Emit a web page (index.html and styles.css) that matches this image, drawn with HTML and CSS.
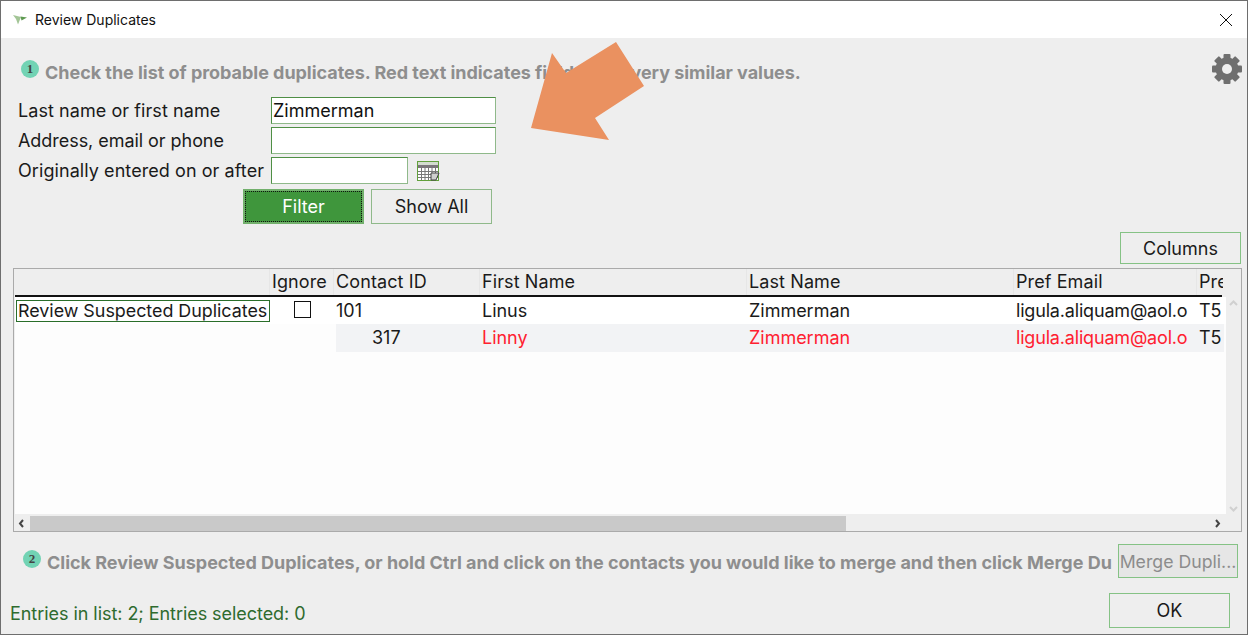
FILE: index.html
```html
<!DOCTYPE html>
<html lang="en">
<head>
<meta charset="utf-8">
<title>Review Duplicates</title>
<link rel="stylesheet" href="styles.css">
</head>
<body>
<div class="window">
  <header class="titlebar">
    <svg class="logo" width="14" height="10" viewBox="0 0 14 10"><path d="M0 0 L8 2 L5 9.5 L3 4 Z" fill="#a3c596"/><path d="M7.5 1.5 L14 2.5 L8.5 5.5 Z" fill="#5e9a50"/></svg>
    <span class="title">Review Duplicates</span>
    <svg class="close" width="14" height="14" viewBox="0 0 14 14"><path d="M1 1 L13 13 M13 1 L1 13" stroke="#111" stroke-width="1" fill="none"/></svg>
  </header>
  <main class="content">
    <div class="step step-one">
      <span class="badge">1</span>
      <span class="step-text">Check the list of probable duplicates. Red text indicates fields with very similar values.</span>
      <svg class="gear" width="32" height="32" viewBox="-16 -16 32 32">
        <g fill="#6f6f6f">
          <rect x="-3.5" y="-15" width="7" height="30" rx="1"/>
          <rect x="-3.5" y="-15" width="7" height="30" rx="1" transform="rotate(45)"/>
          <rect x="-3.5" y="-15" width="7" height="30" rx="1" transform="rotate(90)"/>
          <rect x="-3.5" y="-15" width="7" height="30" rx="1" transform="rotate(135)"/>
          <circle r="11.5"/>
        </g>
        <circle r="5" fill="#eeeeee"/>
      </svg>
    </div>
    <form class="filters">
      <label class="lbl">Last name or first name</label>
      <div class="field-row"><input class="input wide" type="text" value="Zimmerman"></div>
      <label class="lbl lbl-tight">Address, email or phone</label>
      <div class="field-row"><input class="input wide" type="text"></div>
      <label class="lbl">Originally entered on or after</label>
      <div class="field-row">
        <input class="input short" type="text">
        <svg class="cal" width="23" height="21" viewBox="0 0 23 21">
          <rect x="0.5" y="0.5" width="21" height="19" fill="#fff" stroke="#62a03c"/>
          <rect x="1" y="1" width="20" height="3" fill="#d4dcd0"/>
          <rect x="1" y="4" width="20" height="3" fill="#7b767b"/>
          <path d="M1 10.5H21M1 13.5H21M1 16.5H21M4.5 7V19M8 7V19M11.5 7V19M15 7V19M18.5 7V19" stroke="#777" stroke-width="1" fill="none"/>
          <path d="M14 12 H22 L19 19 H14 Z" fill="#cfcfcf" stroke="#444" stroke-width="1"/>
        </svg>
      </div>
    </form>
    <div class="filter-actions">
      <button class="btn primary" type="button">Filter</button>
      <button class="btn" type="button">Show All</button>
    </div>
    <div class="columns-row"><button class="btn" type="button">Columns</button></div>
    <section class="grid-box">
      <div class="grid-main">
        <div class="grid-head">
          <div class="hcell"></div>
          <div class="hcell">Ignore</div>
          <div class="hcell">Contact ID</div>
          <div class="hcell">First Name</div>
          <div class="hcell">Last Name</div>
          <div class="hcell">Pref Email</div>
          <div class="hcell last">Pre</div>
        </div>
        <div class="head-rule"></div>
        <div class="grid-body">
          <div class="grid-row first-row">
            <div class="cell action"><span class="review">Review Suspected Duplicates</span></div>
            <div class="cell check"><span class="checkbox"></span></div>
            <div class="cell">101</div>
            <div class="cell">Linus</div>
            <div class="cell">Zimmerman</div>
            <div class="cell email">ligula.aliquam@aol.o</div>
            <div class="cell last">T5</div>
          </div>
          <div class="grid-row second-row">
            <div class="cell blank"></div>
            <div class="cell blank"></div>
            <div class="cell alt indent">317</div>
            <div class="cell alt red">Linny</div>
            <div class="cell alt red">Zimmerman</div>
            <div class="cell alt red email">ligula.aliquam@aol.o</div>
            <div class="cell alt last">T5</div>
          </div>
        </div>
        <div class="vbar">
          <svg width="15" height="10" viewBox="0 0 15 10"><path d="M4 7 L7.5 3.5 L11 7" stroke="#d0d0d0" stroke-width="2" fill="none"/></svg>
          <svg width="15" height="10" viewBox="0 0 15 10"><path d="M4 3 L7.5 6.5 L11 3" stroke="#d0d0d0" stroke-width="2" fill="none"/></svg>
        </div>
      </div>
      <div class="hbar">
        <svg width="16" height="15" viewBox="0 0 16 15"><path d="M9 4 L6 7.5 L9 11" stroke="#444" stroke-width="2" fill="none"/></svg>
        <div class="track"><div class="thumb"></div></div>
        <svg width="16" height="15" viewBox="0 0 16 15"><path d="M6 4 L9 7.5 L6 11" stroke="#444" stroke-width="2" fill="none"/></svg>
      </div>
    </section>
    <div class="step step-two">
      <span class="badge">2</span>
      <span class="step-text">Click Review Suspected Duplicates, or hold Ctrl and click on the contacts you would like to merge and then click Merge Du</span>
      <button class="btn merge" type="button" disabled>Merge Dupli...</button>
    </div>
    <footer class="footer">
      <span class="status">Entries in list: 2; Entries selected: 0</span>
      <button class="btn" type="button">OK</button>
    </footer>
    <svg class="arrow" width="115" height="100" viewBox="0 0 115 100"><polygon points="21,13 35,33 85,2 113,46 64,78 78,100 0,88" fill="#ea9160"/></svg>
  </main>
</div>
</body>
</html>
```
FILE: styles.css
```css
* { box-sizing: border-box; }
html, body { margin: 0; padding: 0; height: 100%; overflow: hidden; }
body { font-family: Inter, "Noto Sans", sans-serif; font-size: 18px; color: #1a1a1a; background: #eee; }
.window { width: 1248px; height: 635px; border: 1px solid #6e6e6e; display: flex; flex-direction: column; background: #eee; }
.titlebar { height: 37px; flex: none; background: #fff; display: flex; align-items: center; padding: 0 14px 0 12px; }
.logo { margin-right: 8px; }
.title { font-size: 14px; color: #111; flex: 1; }
.content { position: relative; flex: 1; display: flex; flex-direction: column; min-height: 0; }
.step { display: flex; align-items: center; font-weight: 700; color: #8e8e8e; white-space: nowrap; }
.step-one { height: 58px; padding: 10px 4px 0 20px; }
.step-one .step-text { flex: 1; margin-left: 6px; letter-spacing: -0.034px; }
.badge { width: 18px; height: 18px; flex: none; border-radius: 50%; background: #72d3b4; color: #444; font: 700 13px/18px "Liberation Serif", serif; text-align: center; margin-top: -6px; }
.gear { margin-top: -6px; }
.filters { display: grid; grid-template-columns: 253px 1fr; grid-auto-rows: 27px; row-gap: 3px; padding-left: 17px; margin-top: 1px; }
.lbl { line-height: 27px; white-space: nowrap; letter-spacing: 0.07px; }
.lbl-tight { letter-spacing: -0.05px; }
.field-row { display: flex; align-items: center; }
.input { height: 27px; border: 1px solid #8fb98a; border-top-color: #4f8f45; border-left-color: #4f8f45; background: #fff; font: 18px Inter, sans-serif; color: #111; padding: 0 1px; outline: none; }
.wide { width: 225px; }
.short { width: 137px; }
.cal { margin-left: 9px; margin-top: 1px; }
.btn { height: 35px; width: 121px; flex: none; border: 1px solid #8fb98a; background: #eee; font: 18px Inter, sans-serif; color: #1a1a1a; padding: 0; }
.filter-actions { display: flex; gap: 7px; padding-left: 242px; margin-top: 5px; }
.primary { background: #3f963c; color: #fff; border: 2px solid #72b06c; outline: 1px dotted #111; outline-offset: -3px; }
.columns-row { display: flex; justify-content: flex-end; padding-right: 6px; margin-top: 8px; }
.columns-row .btn { height: 32px; border-color: #85c285; }
.grid-box { margin: 4px 5px 0 12px; height: 264px; flex: none; border: 1px solid #aaa; display: flex; flex-direction: column; background: #eee; }
.grid-main { position: relative; flex: 1; display: flex; flex-direction: column; min-height: 0; }
.grid-head, .grid-row { display: grid; grid-template-columns: 256px 64px 146px 267px 267px 183px 26px; }
.grid-head { height: 26px; flex: none; margin-right: 15px; }
.head-rule { height: 2px; flex: none; background: #111; margin: 0 19px 0 1px; }
.hcell { line-height: 26px; padding-left: 2px; border-right: 1px solid #e6e6e6; white-space: nowrap; overflow: hidden; letter-spacing: 0.1px; }
.hcell.last { border-right: 0; padding-left: 2px; }
.grid-body { flex: 1; background: #fdfdfd; margin-right: 15px; margin-left: 1px; margin-bottom: 2px; }
.grid-row { height: 27px; }
.first-row { background: #fff; }
.second-row { background: #fdfdfd; height: 28px; margin-right: 7px; }
.cell { line-height: 27px; padding-left: 1px; white-space: nowrap; overflow: hidden; letter-spacing: -0.02px; }
.cell.email { letter-spacing: -0.18px; }
.cell.alt { background: #f2f3f5; }
.cell.indent { margin-left: 1px; padding-left: 36px; }
.red { color: #ff2030; }
.action { padding-left: 1px; display: flex; align-items: center; }
.review { display: block; height: 22px; line-height: 20px; border: 1px solid #2a6e2a; padding: 0 2px 0 1px; font-size: 17.9px; white-space: nowrap; }
.check { display: flex; justify-content: center; align-items: center; }
.checkbox { width: 17px; height: 17px; border: 1px solid #111; background: #fff; margin-top: -2px; margin-right: 3px; }
.vbar { position: absolute; top: 27px; right: 0; bottom: 0; width: 15px; display: flex; flex-direction: column; justify-content: space-between; background: #eee; padding: 2px 0; }
.hbar { height: 15px; flex: none; display: flex; align-items: center; margin-right: 15px; }
.track { flex: 1; height: 15px; background: #eee; }
.thumb { width: 816px; height: 15px; background: #c9c9c9; }
.step-two { padding: 0 9px 0 22px; height: 34px; margin-top: 12px; }
.step-two .badge { margin-top: -4px; }
.step-two .step-text { flex: 1; margin-left: 6px; letter-spacing: -0.02px; position: relative; top: 1px; }
.merge { width: 120px; height: 34px; background: #e6e6e6; color: #8c8c8c; border-color: #85c285; font-size: 17.7px; white-space: nowrap; }
.footer { display: flex; justify-content: space-between; align-items: center; padding: 0 17px 0 9px; margin-top: 15px; }
.status { color: #2e6b2e; letter-spacing: -0.05px; margin-top: 5px; }
.footer .btn { border-color: #85c285; }
.arrow { position: absolute; left: 530px; top: 2px; }
```
